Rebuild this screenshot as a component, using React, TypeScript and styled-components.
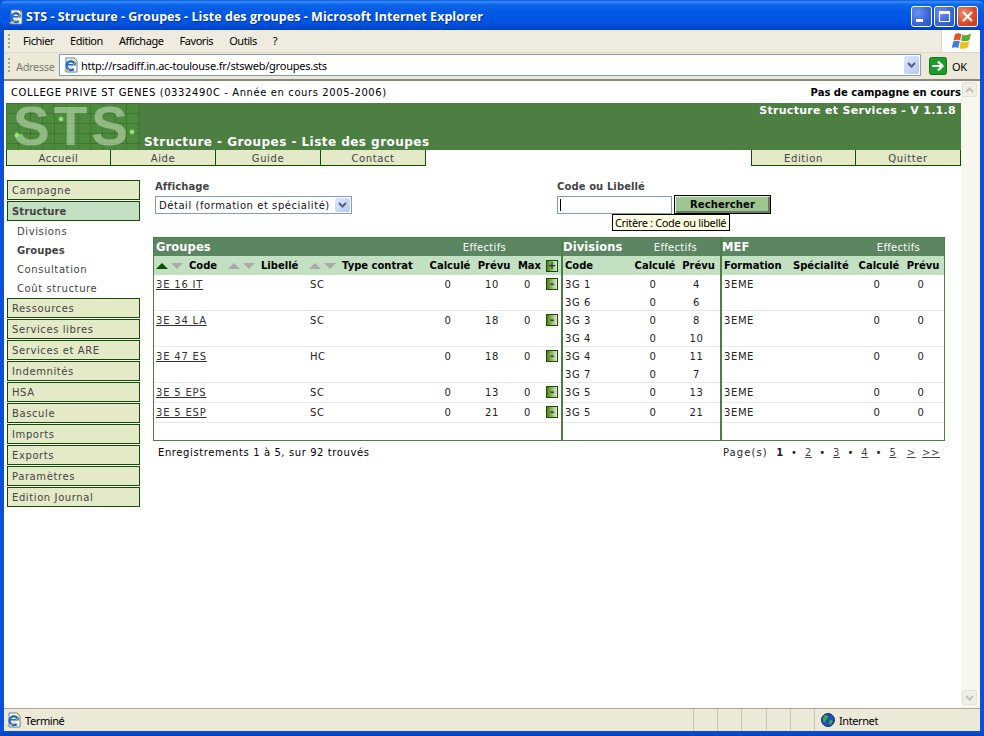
import { Fragment } from "react";
import styled, { createGlobalStyle } from "styled-components";

const GlobalStyle = createGlobalStyle`
  html, body { margin: 0; padding: 0; background: #fff; overflow: hidden; }
  * { box-sizing: border-box; }
`;

const Window = styled.div`
  width: 984px;
  height: 736px;
  display: flex;
  flex-direction: column;
  overflow: hidden;
  background: #0a50d8;
`;

const TitleBar = styled.div`
  height: 30px;
  flex: none;
  display: flex;
  align-items: center;
  padding: 3px 6px 0 8px;
  border-radius: 7px 7px 0 0;
  background: linear-gradient(180deg, #0a5ce0 0, #3a8dfb 2px, #1068ec 4px, #0058e4 12px, #0055e2 22px, #0049d2 27px, #0040c0 30px);
`;

const TitleText = styled.div`
  margin-left: 2px;
  font: bold 12.5px "Open Sans", sans-serif;
  letter-spacing: 0.05px;
  color: #fff;
  text-shadow: 1px 1px 0 #0a2f9a;
  white-space: nowrap;
`;

const WinButtons = styled.div`
  margin-left: auto;
  display: flex;
  gap: 2px;
`;

const WinButton = styled.div<{ $close?: boolean }>`
  width: 21px;
  height: 21px;
  border: 1px solid #fff;
  border-radius: 3px;
  display: flex;
  align-items: center;
  justify-content: center;
  background: ${(p) =>
    p.$close
      ? "radial-gradient(circle at 30% 30%, #ee8a6c, #d9492a 60%, #c23a1c)"
      : "radial-gradient(circle at 30% 30%, #6d90ee, #3a63d8 60%, #2a4fc4)"};
`;

const Frame = styled.div`
  flex: 1;
  min-height: 0;
  display: flex;
  flex-direction: column;
  margin: 0 4px;
  background: #ece9d8;
`;

const MenuBar = styled.div`
  height: 23px;
  flex: none;
  display: flex;
  align-items: stretch;
  background: #efecdf;
  border-bottom: 1px solid #dcd9c8;
`;

const Grip = styled.div<{ $h: number }>`
  width: 2px;
  height: ${(p) => p.$h}px;
  margin: auto 0 auto 4px;
  background: repeating-linear-gradient(180deg, #a8a690 0 2px, transparent 2px 4px);
`;

const MenuItems = styled.div`
  display: flex;
  align-items: center;
  gap: 16px;
  margin-left: 13px;
  padding-bottom: 2px;
  font: 11px "Noto Sans", sans-serif;
  letter-spacing: -0.45px;
  color: #000;
`;

const FlagBox = styled.div`
  margin-left: auto;
  width: 39px;
  display: flex;
  align-items: center;
  justify-content: center;
  background: #fff;
  border-left: 1px solid #d8d5c4;
`;

const AddressBar = styled.div`
  height: 26px;
  flex: none;
  display: flex;
  align-items: center;
  background: #ece9d8;
`;

const AddressLabel = styled.div`
  margin-left: 6px;
  width: 39px;
  font: 11px "Noto Sans", sans-serif;
  letter-spacing: -0.35px;
  color: #7d7b6c;
`;

const AddressField = styled.div`
  width: 862px;
  height: 22px;
  margin: 0 0 2px 4px;
  display: flex;
  align-items: center;
  padding: 0 0 0 3px;
  gap: 2px;
  background: #fff;
  border: 1px solid #7f9db9;
  font: 11px "Noto Sans", sans-serif;
  letter-spacing: -0.22px;
  color: #000;
`;

const DropButton = styled.div`
  margin-left: auto;
  width: 15px;
  height: calc(100% - 2px);
  margin-right: 1px;
  display: flex;
  align-items: center;
  justify-content: center;
  background: linear-gradient(135deg, #dfe7fb, #b5c7f3);
  border-radius: 2px;
`;

const GoLabel = styled.div`
  margin-left: 5px;
  font: 11px "Noto Sans", sans-serif;
  letter-spacing: -0.35px;
  color: #000;
`;

const GoIcon = styled.div`
  margin-left: 8px;
  display: flex;
`;

const Content = styled.div`
  flex: 1;
  min-height: 0;
  display: flex;
  background: #fff;
  border-top: 2px solid #8c8a7c;
`;

const Page = styled.div`
  width: 955px;
  margin-left: 2px;
  font: 10px "DejaVu Sans", sans-serif;
  letter-spacing: 0.6px;
  color: #000;
`;

const TopLine = styled.div`
  height: 22px;
  display: flex;
  align-items: center;
  justify-content: space-between;
  padding: 0 0 0 5px;
`;

const Campaign = styled.b`
  font-weight: bold;
  letter-spacing: 0;
`;

const Banner = styled.div`
  height: 47px;
  display: flex;
  background: #4d7e42;
  color: #fff;
`;

const Logo = styled.div`
  position: relative;
  width: 133px;
  flex: none;
  background-color: #4e8a3e;
  background-image:
    repeating-linear-gradient(90deg, rgba(30, 80, 30, 0.3) 0 1px, transparent 1px 12px),
    repeating-linear-gradient(180deg, rgba(30, 80, 30, 0.3) 0 1px, transparent 1px 10px);
`;

const LogoText = styled.div`
  padding-left: 7px;
  font: bold 55px/47px "Liberation Sans", sans-serif;
  letter-spacing: 4px;
  color: rgba(195, 220, 185, 0.58);
`;

const LogoDot = styled.i<{ $x: number; $y: number }>`
  position: absolute;
  left: ${(p) => p.$x}px;
  top: ${(p) => p.$y}px;
  width: 4px;
  height: 4px;
  border-radius: 50%;
  background: #8df06a;
  box-shadow: 0 0 2px #8df06a;
`;

const BannerTitle = styled.div`
  align-self: flex-end;
  margin-left: 5px;
  font: bold 12px/15px "DejaVu Sans", sans-serif;
  letter-spacing: 0.46px;
`;

const Version = styled.div`
  margin-left: auto;
  padding: 0 5px 0 0;
  font: bold 11px/15px "DejaVu Sans", sans-serif;
  letter-spacing: 0.3px;
`;

const TabBar = styled.div`
  height: 16px;
  display: flex;
  justify-content: space-between;
`;

const TabGroup = styled.div`
  display: flex;
`;

const Tab = styled.div`
  width: 105px;
  display: flex;
  align-items: center;
  justify-content: center;
  padding-top: 1px;
  background: #e4e9c8;
  border-bottom: 1px solid #0f5000;
  border-right: 1px solid #0f5000;
  color: #444;
  &:first-child {
    border-left: 1px solid #0f5000;
  }
`;

const Body = styled.div`
  display: flex;
  padding: 14px 0 0 1px;
`;

const Sidebar = styled.div`
  width: 133px;
  flex: none;
  display: flex;
  flex-direction: column;
  gap: 1px;
`;

const NavBox = styled.div<{ $active?: boolean }>`
  height: 20px;
  display: flex;
  align-items: center;
  padding-left: 4px;
  background: ${(p) => (p.$active ? "#c3e0c3" : "#e4e9c8")};
  border: 1px solid #0f5000;
  color: #444;
  font-weight: ${(p) => (p.$active ? "bold" : "normal")};
  letter-spacing: ${(p) => (p.$active ? "0.1px" : "0.6px")};
`;

const SubNav = styled.div`
  height: 75px;
  display: flex;
  flex-direction: column;
`;

const SubItem = styled.div<{ $active?: boolean }>`
  height: 19px;
  flex: none;
  display: flex;
  align-items: center;
  padding-left: 10px;
  color: #444;
  font-weight: ${(p) => (p.$active ? "bold" : "normal")};
  letter-spacing: ${(p) => (p.$active ? "0.1px" : "0.6px")};
`;

const Main = styled.div`
  margin-left: 13px;
  width: 792px;
`;

const FilterRow = styled.div`
  height: 57px;
  display: flex;
  padding-left: 2px;
`;

const FilterGroup = styled.div<{ $w: number }>`
  position: relative;
  width: ${(p) => p.$w}px;
`;

const FilterLabel = styled.div`
  height: 16px;
  line-height: 14px;
  font-weight: bold;
  letter-spacing: 0.1px;
  color: #444;
`;

const SelectBox = styled.div`
  width: 197px;
  height: 18px;
  display: flex;
  align-items: center;
  padding-left: 3px;
  border: 1px solid #7f9db9;
  letter-spacing: 0.55px;
  color: #111;
`;

const SearchRow = styled.div`
  display: flex;
  align-items: flex-start;
  gap: 2px;
`;

const SearchField = styled.div`
  width: 115px;
  height: 18px;
  padding: 2px;
  border: 1px solid #7f9db9;
`;

const Caret = styled.div`
  width: 1px;
  height: 100%;
  background: #000;
`;

const SearchButton = styled.div`
  width: 97px;
  height: 19px;
  margin-top: -1px;
  display: flex;
  align-items: center;
  justify-content: center;
  border: 1px solid #000;
  box-shadow: inset 1px 1px 0 #e6f2e0, inset -2px -2px 0 #6a7d62;
  background: #9cc58f;
  font-weight: bold;
  letter-spacing: 0.1px;
`;

const Tooltip = styled.div`
  position: absolute;
  left: 55px;
  top: 34px;
  width: 118px;
  height: 17px;
  padding-left: 2px;
  background: #ffffe1;
  border: 1px solid #000;
  font: 11px/15px "Noto Sans", sans-serif;
  letter-spacing: -0.35px;
  white-space: nowrap;
`;

const Table = styled.div`
  display: flex;
  height: 204px;
  border: 1px solid #4d7e42;
`;

const Panel = styled.div<{ $w: number; $divider?: boolean }>`
  width: ${(p) => p.$w}px;
  flex: none;
  ${(p) => (p.$divider ? "border-left: 2px solid #4d7e42;" : "")}
`;

const PanelTitle = styled.div<{ $pl: number; $pr: number }>`
  height: 18px;
  display: flex;
  align-items: center;
  justify-content: space-between;
  padding: 0 ${(p) => p.$pr}px 0 ${(p) => p.$pl}px;
  background: #5c8561;
  color: #fff;
  letter-spacing: 0.3px;
`;

const PanelName = styled.div`
  font: bold 11.5px "DejaVu Sans", sans-serif;
  letter-spacing: 0.1px;
`;

const HeadRow = styled.div<{ $cols: string }>`
  height: 19px;
  display: grid;
  grid-template-columns: ${(p) => p.$cols};
  align-items: center;
  padding-left: 2px;
  background: #c3e0c3;
  font-weight: bold;
  letter-spacing: 0;
  white-space: nowrap;
`;

const Row = styled.div<{ $cols: string; $h: number }>`
  height: ${(p) => p.$h}px;
  display: grid;
  grid-template-columns: ${(p) => p.$cols};
  grid-auto-rows: 18px;
  align-items: center;
  padding-left: 2px;
  border-bottom: 1px solid #e8e8e8;
  color: #222;
  white-space: nowrap;
`;

const HeadCell = styled.div<{ $center?: boolean }>`
  display: flex;
  align-items: center;
  justify-content: ${(p) => (p.$center ? "center" : "flex-start")};
  gap: 6px;
`;

const NumCell = styled.div`
  text-align: center;
  padding-right: 4px;
`;

const TextCell = styled.div<{ $pl?: number }>`
  padding-left: ${(p) => p.$pl ?? 0}px;
`;

const CodeLink = styled.a`
  color: #333;
  text-decoration: underline;
  letter-spacing: 0.8px;
`;

const SortPair = styled.div`
  display: flex;
  gap: 3px;
`;

const Tri = styled.i<{ $down?: boolean; $on?: boolean }>`
  display: block;
  width: 0;
  height: 0;
  border-left: 6px solid transparent;
  border-right: 6px solid transparent;
  ${(p) => (p.$down ? "border-top" : "border-bottom")}: 6px solid ${(p) => (p.$on ? "#0f5000" : "#aaa")};
`;

const Toggle = styled.div`
  width: 12px;
  height: 12px;
  margin-left: 5px;
  display: flex;
  align-items: center;
  justify-content: center;
  border: 1px solid #0f5000;
  background: linear-gradient(90deg, #4f8214, #e4e9cc);
  color: #123f3f;
  font: bold 10px/10px "DejaVu Sans", sans-serif;
  letter-spacing: 0;
`;

const Footer = styled.div`
  display: flex;
  justify-content: space-between;
  padding: 5px 5px 0 5px;
  line-height: 13px;
`;

const Pager = styled.div`
  display: flex;
  gap: 7.35px;
  color: #222;
`;

const PagerLabel = styled.span`
  margin-right: 1px;
  letter-spacing: 1.1px;
`;

const PagerLink = styled.a<{ $ml?: number }>`
  margin-left: ${(p) => p.$ml ?? 0}px;
  color: #444;
  text-decoration: underline;
`;

const Scrollbar = styled.div`
  flex: 1;
  display: flex;
  flex-direction: column;
  justify-content: space-between;
  padding: 1px 3px 3px 1px;
  background: #f7f7f0;
`;

const ScrollButton = styled.div`
  width: 15px;
  height: 15px;
  display: flex;
  align-items: center;
  justify-content: center;
  background: #f0efe4;
  border: 1px solid #e4e2d4;
  border-radius: 2px;
`;

const StatusBar = styled.div`
  height: 23px;
  flex: none;
  display: flex;
  align-items: center;
  padding-left: 2px;
  background: #ece9d8;
  border-top: 1px solid #aca899;
  font: 11px "Noto Sans", sans-serif;
  letter-spacing: -0.4px;
  color: #000;
`;

const StatusText = styled.div`
  margin-left: 3px;
  width: 668px;
`;

const StatusCell = styled.div`
  width: 24.2px;
  height: 100%;
  border-left: 1px solid #c8c5b2;
`;

const ZoneCell = styled.div`
  display: flex;
  align-items: center;
  gap: 4px;
  height: 100%;
  padding-left: 6px;
  border-left: 1px solid #c8c5b2;
`;

const BottomEdge = styled.div`
  height: 5px;
  flex: none;
  background: linear-gradient(180deg, #0a50d8, #0840b8);
`;

const Chevron = ({ dir, color }: { dir: "up" | "down"; color: string }) => (
  <svg width="9" height="6" viewBox="0 0 9 6">
    <path
      d={dir === "down" ? "M1 1 L4.5 4.5 L8 1" : "M1 5 L4.5 1.5 L8 5"}
      fill="none"
      stroke={color}
      strokeWidth="2"
    />
  </svg>
);

const IeIcon = () => (
  <svg width="16" height="16" viewBox="0 0 16 16">
    <path d="M3 1 H11 L14 4 V15 H3 Z" fill="#fff" stroke="#6a7a9a" strokeWidth="1" />
    <path d="M12.2 7.8 A4.4 4.4 0 1 0 10.8 12" fill="none" stroke="#1f6fd0" strokeWidth="2.4" />
    <path d="M4 7.8 H12.4" stroke="#1f6fd0" strokeWidth="1.6" />
    <path d="M2 13 C0 16 6 13 9.5 9 C13 5 15 1 12 2" fill="none" stroke="#e8b830" strokeWidth="1" />
  </svg>
);

const Flag = () => (
  <svg width="21" height="19" viewBox="0 0 21 19">
    <path d="M4 2 C6 1 8 1 10.5 2 L9 8.5 C7 7.5 5 7.5 2.5 8.5 Z" fill="#e8502a" />
    <path d="M11.5 2.5 C14 3.5 16 3.5 20 1.5 L18.5 8 C15.5 9.5 13 9.5 10 8.5 Z" fill="#58b030" />
    <path d="M2.2 9.5 C5 8.5 7 8.5 8.8 9.5 L7.3 16 C5 15 3 15 0.8 16 Z" fill="#3a7ee0" />
    <path d="M9.8 9.6 C13 10.5 15 10.5 18.2 9 L16.8 15.5 C14 17 11 17 8.4 16.2 Z" fill="#f2c020" />
  </svg>
);

const GoArrow = () => (
  <svg width="18" height="18" viewBox="0 0 18 18">
    <rect x="0.5" y="0.5" width="17" height="17" rx="2" fill="#1f9a2e" stroke="#167022" />
    <path d="M3 9 H13 M9 4.5 L13.5 9 L9 13.5" fill="none" stroke="#fff" strokeWidth="2.2" />
  </svg>
);

const Globe = () => (
  <svg width="14" height="14" viewBox="0 0 14 14">
    <circle cx="7" cy="7" r="6.5" fill="#1f4fb8" stroke="#123070" />
    <path d="M4 2 C7 2 8 4 6 6 C4 7 5 10 3 9 C1 7 2 4 4 2 Z M9 7 C11 6 12 8 11 10 C10 12 8 12 8 10 Z" fill="#3eaa3a" />
  </svg>
);

const groupCols = "72px 81px 121px 40px 48px 23px 20px";
const divisionCols = "68px 44px 43px";
const mefCols = "69px 64px 44px 44px";

const groups: { code: string; type: string; prevu: number; divisions: [string, number][] }[] = [
  { code: "3E 16 IT", type: "SC", prevu: 10, divisions: [["3G 1", 4], ["3G 6", 6]] },
  { code: "3E 34 LA", type: "SC", prevu: 18, divisions: [["3G 3", 8], ["3G 4", 10]] },
  { code: "3E 47 ES", type: "HC", prevu: 18, divisions: [["3G 4", 11], ["3G 7", 7]] },
  { code: "3E 5 EPS", type: "SC", prevu: 13, divisions: [["3G 5", 13]] },
  { code: "3E 5 ESP", type: "SC", prevu: 21, divisions: [["3G 5", 21]] },
];

const navAfter = ["Ressources", "Services libres", "Services et ARE", "Indemnités", "HSA", "Bascule", "Imports", "Exports", "Paramètres", "Edition Journal"];

const rowHeight = (lines: number) => (lines === 2 ? 36 : 20);

const App = () => {
  return (
    <Window>
      <GlobalStyle />
      <TitleBar>
        <IeIcon />
        <TitleText>STS - Structure - Groupes - Liste des groupes - Microsoft Internet Explorer</TitleText>
        <WinButtons>
          <WinButton>
            <svg width="13" height="13" viewBox="0 0 13 13">
              <rect x="1" y="9" width="7" height="3" fill="#fff" />
            </svg>
          </WinButton>
          <WinButton>
            <svg width="13" height="13" viewBox="0 0 13 13">
              <path d="M1.5 3.5 H11.5 V11.5 H1.5 Z M1 2 H12" fill="none" stroke="#fff" strokeWidth="1.2" />
              <rect x="1" y="1" width="11" height="2" fill="#fff" />
            </svg>
          </WinButton>
          <WinButton $close>
            <svg width="13" height="13" viewBox="0 0 13 13">
              <path d="M2 2 L11 11 M11 2 L2 11" stroke="#fff" strokeWidth="2.2" />
            </svg>
          </WinButton>
        </WinButtons>
      </TitleBar>
      <Frame>
        <MenuBar>
          <Grip $h={15} />
          <MenuItems>
            <span>Fichier</span>
            <span>Edition</span>
            <span>Affichage</span>
            <span>Favoris</span>
            <span>Outils</span>
            <span>?</span>
          </MenuItems>
          <FlagBox>
            <Flag />
          </FlagBox>
        </MenuBar>
        <AddressBar>
          <Grip $h={16} />
          <AddressLabel>Adresse</AddressLabel>
          <AddressField>
            <IeIcon />
            <span>http://rsadiff.in.ac-toulouse.fr/stsweb/groupes.sts</span>
            <DropButton>
              <Chevron dir="down" color="#4d6185" />
            </DropButton>
          </AddressField>
          <GoIcon>
            <GoArrow />
          </GoIcon>
          <GoLabel>OK</GoLabel>
        </AddressBar>
        <Content>
          <Page>
            <TopLine>
              <span>COLLEGE PRIVE ST GENES (0332490C - Année en cours 2005-2006)</span>
              <Campaign>Pas de campagne en cours</Campaign>
            </TopLine>
            <Banner>
              <Logo>
                <LogoText>STS</LogoText>
                <LogoDot $x={53} $y={14} />
                <LogoDot $x={9} $y={30} />
                <LogoDot $x={124} $y={27} />
              </Logo>
              <BannerTitle>Structure - Groupes - Liste des groupes</BannerTitle>
              <Version>Structure et Services - V 1.1.8</Version>
            </Banner>
            <TabBar>
              <TabGroup>
                <Tab>Accueil</Tab>
                <Tab>Aide</Tab>
                <Tab>Guide</Tab>
                <Tab>Contact</Tab>
              </TabGroup>
              <TabGroup>
                <Tab>Edition</Tab>
                <Tab>Quitter</Tab>
              </TabGroup>
            </TabBar>
            <Body>
              <Sidebar>
                <NavBox>Campagne</NavBox>
                <NavBox $active>Structure</NavBox>
                <SubNav>
                  <SubItem>Divisions</SubItem>
                  <SubItem $active>Groupes</SubItem>
                  <SubItem>Consultation</SubItem>
                  <SubItem>Coût structure</SubItem>
                </SubNav>
                {navAfter.map((name) => (
                  <NavBox key={name}>{name}</NavBox>
                ))}
              </Sidebar>
              <Main>
                <FilterRow>
                  <FilterGroup $w={402}>
                    <FilterLabel>Affichage</FilterLabel>
                    <SelectBox>
                      <span>Détail (formation et spécialité)</span>
                      <DropButton>
                        <Chevron dir="down" color="#4d6185" />
                      </DropButton>
                    </SelectBox>
                  </FilterGroup>
                  <FilterGroup $w={215}>
                    <FilterLabel>Code ou Libellé</FilterLabel>
                    <SearchRow>
                      <SearchField>
                        <Caret />
                      </SearchField>
                      <SearchButton>Rechercher</SearchButton>
                    </SearchRow>
                    <Tooltip>Critère : Code ou libellé</Tooltip>
                  </FilterGroup>
                </FilterRow>
                <Table>
                  <Panel $w={407}>
                    <PanelTitle $pl={2} $pr={55}>
                      <PanelName>Groupes</PanelName>
                      <span>Effectifs</span>
                    </PanelTitle>
                    <HeadRow $cols={groupCols}>
                      <HeadCell>
                        <SortPair>
                          <Tri $on />
                          <Tri $down />
                        </SortPair>
                        Code
                      </HeadCell>
                      <HeadCell>
                        <SortPair>
                          <Tri />
                          <Tri $down />
                        </SortPair>
                        Libellé
                      </HeadCell>
                      <HeadCell>
                        <SortPair>
                          <Tri />
                          <Tri $down />
                        </SortPair>
                        Type contrat
                      </HeadCell>
                      <HeadCell $center>Calculé</HeadCell>
                      <HeadCell $center>Prévu</HeadCell>
                      <HeadCell $center>Max</HeadCell>
                      <Toggle>+</Toggle>
                    </HeadRow>
                    {groups.map((g) => (
                      <Row key={g.code} $cols={groupCols} $h={rowHeight(g.divisions.length)}>
                        <TextCell>
                          <CodeLink>{g.code}</CodeLink>
                        </TextCell>
                        <span />
                        <TextCell $pl={1}>{g.type}</TextCell>
                        <NumCell>0</NumCell>
                        <NumCell>{g.prevu}</NumCell>
                        <NumCell>0</NumCell>
                        <Toggle>-</Toggle>
                      </Row>
                    ))}
                  </Panel>
                  <Panel $w={159} $divider>
                    <PanelTitle $pl={0} $pr={23}>
                      <PanelName>Divisions</PanelName>
                      <span>Effectifs</span>
                    </PanelTitle>
                    <HeadRow $cols={divisionCols}>
                      <HeadCell>Code</HeadCell>
                      <HeadCell $center>Calculé</HeadCell>
                      <HeadCell $center>Prévu</HeadCell>
                    </HeadRow>
                    {groups.map((g) => (
                      <Row key={g.code} $cols={divisionCols} $h={rowHeight(g.divisions.length)}>
                        {g.divisions.map(([name, count]) => (
                          <Fragment key={name}>
                            <TextCell>{name}</TextCell>
                            <NumCell>0</NumCell>
                            <NumCell>{count}</NumCell>
                          </Fragment>
                        ))}
                      </Row>
                    ))}
                  </Panel>
                  <Panel $w={224} $divider>
                    <PanelTitle $pl={0} $pr={24}>
                      <PanelName>MEF</PanelName>
                      <span>Effectifs</span>
                    </PanelTitle>
                    <HeadRow $cols={mefCols}>
                      <HeadCell>Formation</HeadCell>
                      <HeadCell>Spécialité</HeadCell>
                      <HeadCell $center>Calculé</HeadCell>
                      <HeadCell $center>Prévu</HeadCell>
                    </HeadRow>
                    {groups.map((g) => (
                      <Row key={g.code} $cols={mefCols} $h={rowHeight(g.divisions.length)}>
                        <TextCell>3EME</TextCell>
                        <span />
                        <NumCell>0</NumCell>
                        <NumCell>0</NumCell>
                      </Row>
                    ))}
                  </Panel>
                </Table>
                <Footer>
                  <span>Enregistrements 1 à 5, sur 92 trouvés</span>
                  <Pager>
                    <PagerLabel>Page(s)</PagerLabel>
                    <b>1</b>
                    <span>•</span>
                    <PagerLink>2</PagerLink>
                    <span>•</span>
                    <PagerLink>3</PagerLink>
                    <span>•</span>
                    <PagerLink>4</PagerLink>
                    <span>•</span>
                    <PagerLink>5</PagerLink>
                    <PagerLink $ml={3}>&gt;</PagerLink>
                    <PagerLink $ml={-1}>&gt;&gt;</PagerLink>
                  </Pager>
                </Footer>
              </Main>
            </Body>
          </Page>
          <Scrollbar>
            <ScrollButton>
              <Chevron dir="up" color="#c4c2b4" />
            </ScrollButton>
            <ScrollButton>
              <Chevron dir="down" color="#c4c2b4" />
            </ScrollButton>
          </Scrollbar>
        </Content>
        <StatusBar>
          <IeIcon />
          <StatusText>Terminé</StatusText>
          <StatusCell />
          <StatusCell />
          <StatusCell />
          <StatusCell />
          <StatusCell />
          <ZoneCell>
            <Globe />
            <span>Internet</span>
          </ZoneCell>
        </StatusBar>
      </Frame>
      <BottomEdge />
    </Window>
  );
};

export default App;
